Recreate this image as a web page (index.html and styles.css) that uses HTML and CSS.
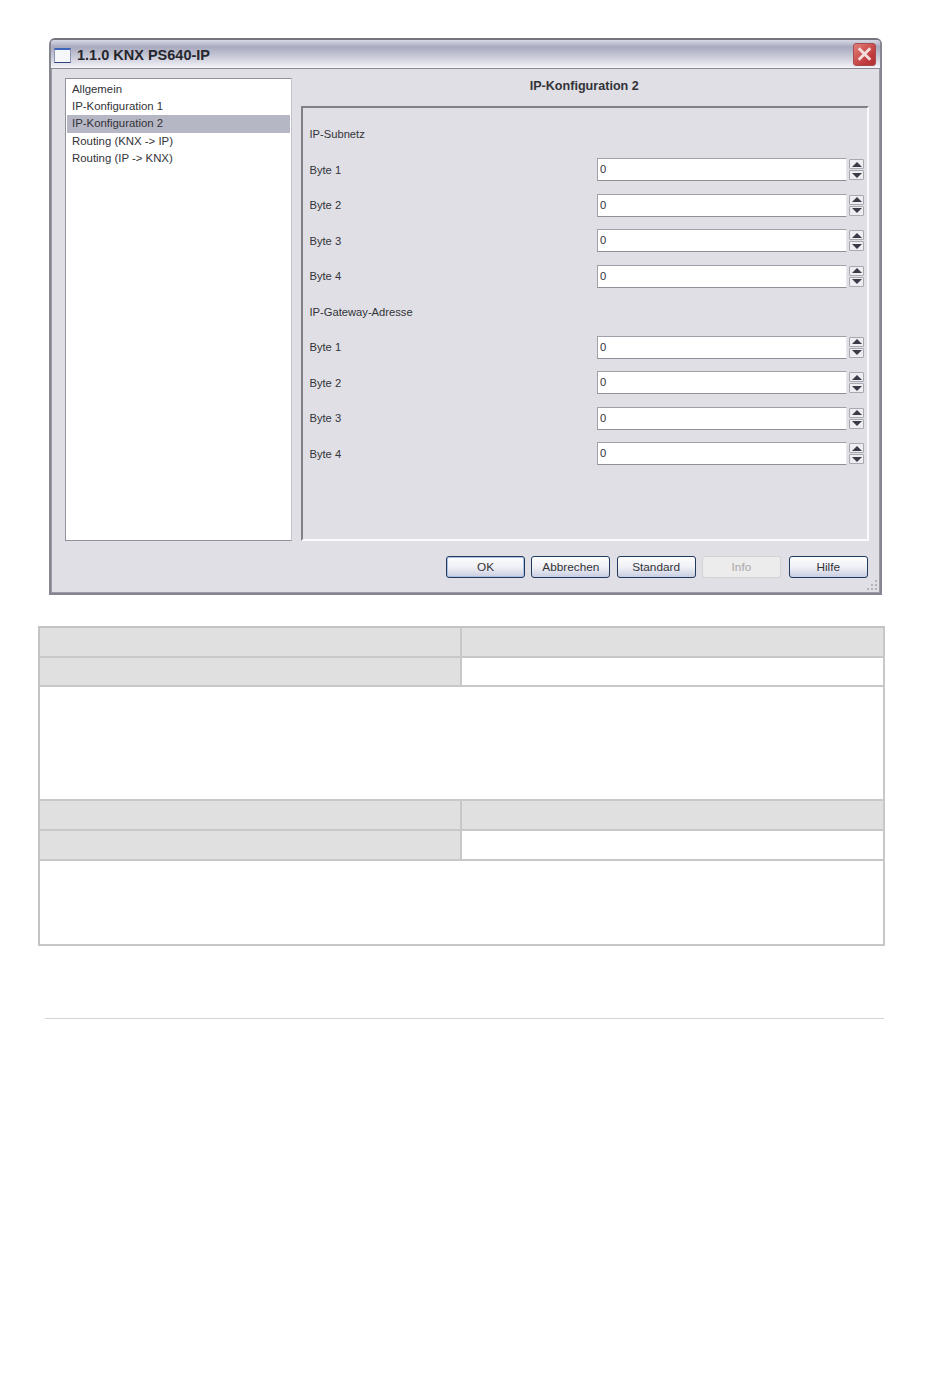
FILE: index.html
```html
<!DOCTYPE html>
<html lang="en">
<head>
  <meta charset="UTF-8">
  <meta name="viewport" content="width=device-width, initial-scale=1.0">
  <title>KNX PS640-IP</title>
  <link rel="stylesheet" href="styles.css">
</head>

<body>
  <div class="window">
    <div class="titlebar">
      <span class="app-icon"></span>
      <span class="title">1.1.0 KNX PS640-IP</span>
      <span class="close">
        <svg width="22" height="22" viewBox="0 0 22 22">
          <path d="M6 6 L16 16 M16 6 L6 16" stroke="#f2dcdc" stroke-width="3" stroke-linecap="square" fill="none"/>
        </svg>
      </span>
    </div>

    <div class="client">
      <div class="content">
        <ul class="tree">
          <li>Allgemein</li>
          <li>IP-Konfiguration 1</li>
          <li class="selected">IP-Konfiguration 2</li>
          <li>Routing (KNX -&gt; IP)</li>
          <li>Routing (IP -&gt; KNX)</li>
        </ul>

        <div class="page">
          <h2>IP-Konfiguration 2</h2>
          <div class="panel">
            <div class="row">IP-Subnetz</div>
            <div class="row"><span>Byte 1</span><div class="field"><span class="input">0</span><span class="spin"><i class="up"></i><i class="down"></i></span></div></div>
            <div class="row"><span>Byte 2</span><div class="field"><span class="input">0</span><span class="spin"><i class="up"></i><i class="down"></i></span></div></div>
            <div class="row"><span>Byte 3</span><div class="field"><span class="input">0</span><span class="spin"><i class="up"></i><i class="down"></i></span></div></div>
            <div class="row"><span>Byte 4</span><div class="field"><span class="input">0</span><span class="spin"><i class="up"></i><i class="down"></i></span></div></div>
            <div class="row">IP-Gateway-Adresse</div>
            <div class="row"><span>Byte 1</span><div class="field"><span class="input">0</span><span class="spin"><i class="up"></i><i class="down"></i></span></div></div>
            <div class="row"><span>Byte 2</span><div class="field"><span class="input">0</span><span class="spin"><i class="up"></i><i class="down"></i></span></div></div>
            <div class="row"><span>Byte 3</span><div class="field"><span class="input">0</span><span class="spin"><i class="up"></i><i class="down"></i></span></div></div>
            <div class="row"><span>Byte 4</span><div class="field"><span class="input">0</span><span class="spin"><i class="up"></i><i class="down"></i></span></div></div>
          </div>
        </div>
      </div>

      <div class="buttons">
        <button class="btn default">OK</button>
        <button class="btn">Abbrechen</button>
        <button class="btn">Standard</button>
        <button class="btn disabled">Info</button>
        <button class="btn last">Hilfe</button>
      </div>
      <svg class="grip" width="12" height="12" viewBox="0 0 12 12">
        <path d="M9 1h2v2H9z M5 5h2v2H5z M9 5h2v2H9z M1 9h2v2H1z M5 9h2v2H5z M9 9h2v2H9z" fill="#b4b4ba"/>
      </svg>
    </div>
  </div>

  <div class="params">
    <div class="cell head"></div><div class="cell head"></div>
    <div class="cell head"></div><div class="cell"></div>
    <div class="cell wide"></div>
    <div class="cell head"></div><div class="cell head"></div>
    <div class="cell head"></div><div class="cell"></div>
    <div class="cell wide"></div>
  </div>

  <div class="rule"></div>
</body>
</html>
```

FILE: styles.css
```css
* {
  box-sizing: border-box;
}

body {
  font-family: 'Liberation Sans', sans-serif;
  background-color: #fff;
  margin: 0;
  padding: 38px 0 0 0;
  color: #333338;
}

.window {
  width: 833px;
  height: 557px;
  margin-left: 49px;
  border: 2px solid #868692;
  border-top-color: #74747f;
  border-radius: 6px 6px 0 0;
  background-color: #dfdfe5;
  display: flex;
  flex-direction: column;
}

.titlebar {
  height: 29px;
  flex: none;
  display: flex;
  align-items: center;
  padding: 2px 3px 0 3px;
  background: linear-gradient(to bottom, #d8d9e6 0%, #a8a9bd 25%, #d5d6e1 72%, #f4f4f8 100%);
  border-bottom: 1px solid #8a8a96;
  border-radius: 4px 4px 0 0;
}

.app-icon {
  width: 17px;
  height: 15px;
  background-color: #f6f7fb;
  border: 1px solid #34447c;
  border-top-width: 2px;
  border-top-color: #3c64b8;
  border-right-color: #8a94b8;
  border-left-color: #8a94b8;
}

.title {
  margin-left: 6px;
  font-size: 14.5px;
  font-weight: bold;
  color: #26262e;
  flex: 1;
}

.close {
  width: 23px;
  height: 23px;
  margin: -2px 1px 0 0;
  background: linear-gradient(135deg, #e27f78, #c03a3c 70%, #b23034);
  border: 1px solid #a94a50;
  border-radius: 3px;
  display: flex;
  align-items: center;
  justify-content: center;
}

.client {
  flex: 1;
  position: relative;
  border: 1px solid #9a9aa6;
  border-top: none;
  padding: 9px 10px 0 13px;
}

.content {
  display: flex;
  height: 463px;
}

.tree {
  width: 228px;
  list-style: none;
  margin: 0;
  padding: 2px 1px;
  background-color: #fff;
  border: 1px solid #8f939c;
  border-right-color: #c4c4cc;
  font-size: 11.4px;
}

.tree li {
  height: 17.2px;
  line-height: 17.2px;
  padding-left: 5px;
}

.tree .selected {
  background-color: #b6b7c4;
}

.page {
  width: 569px;
  margin-left: 9px;
  display: flex;
  flex-direction: column;
}

.page h2 {
  height: 28px;
  margin: 0;
  padding: 1px 2px 0 0;
  font-size: 12.6px;
  line-height: 15px;
  font-weight: bold;
  text-align: center;
}

.panel {
  flex: 1;
  padding: 8.5px 3px 0 6px;
  border: 2px solid #fafafc;
  border-top-color: #808088;
  border-left-color: #808088;
  font-size: 11.2px;
}

.row {
  height: 35.5px;
  display: flex;
  align-items: center;
  justify-content: space-between;
}

.field {
  display: flex;
  align-items: center;
}

.input {
  width: 250px;
  height: 23px;
  padding: 3px 2px;
  background-color: #fff;
  border: 1px solid #a0a0a8;
  border-right-color: #e8e8ec;
  border-bottom-color: #909098;
  line-height: 14px;
}

.spin {
  width: 15px;
  margin-left: 2px;
  display: flex;
  flex-direction: column;
  gap: 1px;
}

.spin i {
  height: 10px;
  display: flex;
  align-items: center;
  justify-content: center;
  background-color: #eeeef2;
  border: 1px solid #a8a8b0;
  border-radius: 1px;
}

.spin i::after {
  content: "";
  border-left: 5px solid transparent;
  border-right: 5px solid transparent;
}

.spin .up::after {
  border-bottom: 5px solid #3a3a48;
}

.spin .down::after {
  border-top: 5px solid #3a3a48;
}

.buttons {
  display: flex;
  margin-top: 15px;
  padding-left: 381px;
  gap: 6.3px;
}

.btn {
  width: 79px;
  height: 22px;
  padding: 0;
  font-family: inherit;
  font-size: 11.8px;
  color: #333338;
  background: linear-gradient(to bottom, #fdfdfe 0%, #f0f1f6 50%, #c9cde0 100%);
  border: 1px solid #1f3a5c;
  border-radius: 3px;
}

.btn.default {
  box-shadow: inset 0 0 0 1px #a9c0e4;
}

.btn.disabled {
  background: #ececec;
  border-color: #d2d2d2;
  color: #a8a8a8;
}

.btn.last {
  margin-left: 1.5px;
}

.grip {
  position: absolute;
  right: 1px;
  bottom: 1px;
}

.params {
  width: 847px;
  height: 320px;
  margin: 31px 0 0 38px;
  display: grid;
  grid-template-columns: 422px 423px;
  grid-template-rows: 30px 29px 114px 30px 30px 85px;
  border-top: 2px solid #c4c4c4;
  border-left: 2px solid #c4c4c4;
}

.cell {
  border-right: 2px solid #c8c8c8;
  border-bottom: 2px solid #c8c8c8;
}

.head {
  background-color: #e0e0e0;
}

.wide {
  grid-column: 1 / 3;
}

.rule {
  width: 839px;
  height: 1px;
  margin: 72px 0 0 45px;
  background-color: #d4d4d4;
}
```
